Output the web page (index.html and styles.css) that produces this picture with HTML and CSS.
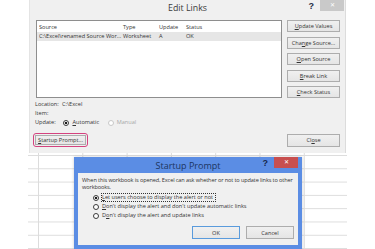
FILE: index.html
```html
<!DOCTYPE html>
<html lang="en">
<head>
  <meta charset="UTF-8">
  <meta name="viewport" content="width=device-width, initial-scale=1.0">
  <title>Edit Links - Startup Prompt</title>
  <link rel="stylesheet" href="styles.css">
</head>
<body>
  <div class="desktop">
    <!-- Edit Links dialog -->
    <section class="window edit-links">
      <header class="titlebar">
        <span></span>
        <span class="title">Edit Links</span>
        <span class="controls">
          <span class="help">?</span>
          <span class="close">✕</span>
        </span>
      </header>

      <div class="links-body">
        <div class="links-top">
          <div class="list">
            <div class="list-row list-head">
              <span class="col-source">Source</span>
              <span class="col-type">Type</span>
              <span class="col-update">Update</span>
              <span class="col-status">Status</span>
            </div>
            <div class="list-row selected">
              <span class="col-source">C:\Excel\renamed Source Wor...</span>
              <span class="col-type">Worksheet</span>
              <span class="col-update">A</span>
              <span class="col-status">OK</span>
            </div>
          </div>
          <div class="side-buttons">
            <button class="btn"><u>U</u>pdate Values</button>
            <button class="btn">Cha<u>n</u>ge Source...</button>
            <button class="btn"><u>O</u>pen Source</button>
            <button class="btn"><u>B</u>reak Link</button>
            <button class="btn"><u>C</u>heck Status</button>
          </div>
        </div>

        <div class="details">
          <p><span class="label">Location:</span>C:\Excel</p>
          <p><span class="label">Item:</span></p>
          <p class="update-line">
            <span class="label">Update:</span>
            <span class="radio checked"></span><span class="opt"><u>A</u>utomatic</span>
            <span class="radio disabled"></span><span class="opt disabled">Manual</span>
          </p>
        </div>

        <div class="links-bottom">
          <div class="marker">
            <button class="btn startup-btn"><u>S</u>tartup Prompt...</button>
          </div>
          <button class="btn close-btn">Cl<u>o</u>se</button>
        </div>
      </div>
    </section>

    <!-- Worksheet behind the dialogs -->
    <div class="sheet"></div>

    <!-- Startup Prompt dialog -->
    <section class="window startup">
      <header class="titlebar">
        <span></span>
        <span class="title">Startup Prompt</span>
        <span class="controls">
          <span class="help">?</span>
          <span class="close">✕</span>
        </span>
      </header>
      <div class="startup-body">
        <p class="intro">When this workbook is opened, Excel can ask whether or not to update links to other workbooks.</p>
        <ul class="choices">
          <li><span class="radio checked"></span><span class="focus"><u>L</u>et users choose to display the alert or not</span></li>
          <li><span class="radio"></span><span><u>D</u>on't display the alert and don't update automatic links</span></li>
          <li><span class="radio"></span><span>D<u>o</u>n't display the alert and update links</span></li>
        </ul>
        <div class="startup-buttons">
          <button class="btn default">OK</button>
          <button class="btn">Cancel</button>
        </div>
      </div>
    </section>
  </div>
</body>
</html>
```

FILE: styles.css
```css
body {
  margin: 0;
  background: #fff;
  font-family: 'Open Sans', 'Noto Sans', sans-serif;
  color: #333;
}

.desktop {
  position: relative;
  width: 375px;
  height: 249px;
  overflow: hidden;
  background: #fff;
}

p {
  margin: 0;
}

u {
  text-decoration: underline;
  text-underline-offset: 1px;
}

/* common window parts */

.titlebar {
  display: grid;
  grid-template-columns: 1fr auto 1fr;
  align-items: start;
}

.titlebar .title {
  font-size: 8.8px;
  line-height: 16px;
}

.controls {
  justify-self: end;
  display: flex;
  align-items: flex-start;
}

.help {
  font-family: 'Liberation Sans', sans-serif;
  font-weight: bold;
  font-size: 9px;
  line-height: 12px;
  margin-right: 6px;
  color: #1e2b44;
}

.close {
  width: 24px;
  height: 11px;
  line-height: 11px;
  text-align: center;
  font-size: 6px;
  color: #fff;
}

.btn {
  font-family: inherit;
  font-size: 5.6px;
  color: #333;
  padding: 0;
  height: 12px;
  border: 1px solid #adadad;
  background: linear-gradient(#f0f0f0, #e5e5e5);
}

.radio {
  display: inline-block;
  box-sizing: border-box;
  width: 6px;
  height: 6px;
  border: 1px solid #3c3c3c;
  border-radius: 50%;
  background: #fff;
  vertical-align: middle;
}

.radio.checked {
  background: radial-gradient(circle, #1a1a1a 0 1.3px, #fff 1.6px);
}

.radio.disabled {
  border-color: #c8c8c8;
}

/* Edit Links */

.edit-links {
  margin-left: 29px;
  width: 317px;
  height: 153px;
  box-sizing: border-box;
  background: #f0f0f0;
  border-right: 1px solid #dcdcdc;
  border-left: 1px solid #e4e4e4;
}

.edit-links .titlebar {
  height: 20px;
}

.edit-links .title {
  color: #3a3a3a;
}

.edit-links .close {
  background: #c9c9c9;
  margin-right: 1px;
}

.links-body {
  padding: 0 5px 0 6px;
}

.links-top {
  display: flex;
  gap: 5px;
}

.list {
  width: 246px;
  height: 78px;
  box-sizing: border-box;
  border: 1px solid #8e8e8e;
  background: #fff;
  font-size: 5.6px;
  padding-top: 2px;
}

.list-row {
  display: flex;
  height: 9px;
  line-height: 9px;
  padding-left: 2px;
}

.list-row.selected {
  background: #e6e6e6;
}

.col-source { width: 84px; white-space: nowrap; overflow: hidden; }
.col-type { width: 36px; }
.col-update { width: 27px; }
.col-status { width: 40px; }

.side-buttons {
  width: 53px;
  display: flex;
  flex-direction: column;
  gap: 4.5px;
}

.details {
  margin-top: 2px;
  font-size: 5.6px;
  line-height: 9px;
}

.label {
  display: inline-block;
  width: 27px;
  margin-left: -1px;
}

.update-line .radio {
  margin: 0 3px 0 0;
}

.update-line .opt {
  margin-right: 7px;
}

.opt.disabled {
  color: #a8a8a8;
}

.links-bottom {
  margin-top: 6px;
  display: flex;
  justify-content: space-between;
  align-items: center;
}

.marker {
  display: flex;
  margin-left: -3px;
  border: 1.5px solid #d4437f;
  border-radius: 3px;
  padding: 1px;
}

.startup-btn {
  width: 51px;
  height: 10px;
}

.close-btn {
  width: 53px;
  height: 13px;
}

/* worksheet */

.sheet {
  margin-left: 28px;
  width: 319px;
  height: 96px;
  background-image:
    linear-gradient(to right, #dcdcdc 1px, transparent 1px),
    linear-gradient(to bottom, #dcdcdc 1px, transparent 1px);
  background-size: 44.3px 100%, 100% 13.3px;
  background-position: 10px 0, 0 2px;
}

/* Startup Prompt */

.startup {
  position: absolute;
  left: 74px;
  top: 157px;
  width: 228px;
  height: 92px;
  box-sizing: border-box;
  padding: 0 4px 4px;
  background: #5b8de4;
  box-shadow: 0 0 3px rgba(0, 0, 0, 0.2);
}

.startup .titlebar {
  height: 16px;
}

.startup .title {
  font-size: 9px;
  line-height: 17px;
  color: #1c3560;
}

.startup .help {
  color: #15264a;
}

.startup .close {
  background: #c84f4f;
  margin-right: 0;
}

.startup-body {
  height: 72px;
  box-sizing: border-box;
  background: #f0f0f0;
  padding: 4px 2px 0 4px;
  font-size: 5.6px;
}

.intro {
  line-height: 7px;
  letter-spacing: -0.12px;
}

.choices {
  list-style: none;
  margin: 2px 0 0;
  padding: 0 0 0 11px;
}

.choices li {
  height: 9px;
  line-height: 9px;
  display: flex;
  align-items: center;
}

.choices .radio {
  margin-right: 3px;
}

.focus {
  outline: 1px dotted #333;
  line-height: 7px;
  padding-right: 2px;
}

.startup-buttons {
  margin-top: 6px;
  padding-right: 2px;
  display: flex;
  justify-content: flex-end;
  gap: 6px;
}

.startup-buttons .btn {
  width: 48px;
  height: 13px;
}

.startup-buttons .default {
  border-color: #5a9bdc;
}
```
